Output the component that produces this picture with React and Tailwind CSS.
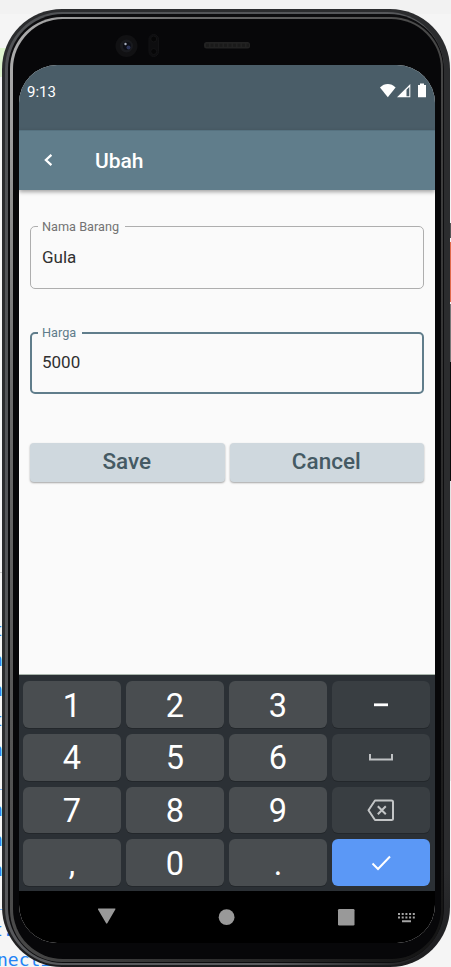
import React from "react";

const codeRows = [
  { top: 619, text: "t" },
  { top: 649, text: "n" },
  { top: 679, text: "n" },
  { top: 709, text: "t" },
  { top: 739, text: "n" },
  { top: 769, text: "_" },
  { top: 799, text: "n" },
  { top: 829, text: "n" },
  { top: 859, text: "n" },
  { top: 889, text: "_" },
  { top: 919, text: "t:" },
];

function EditorBackdrop() {
  return (
    <div className="absolute inset-0 overflow-hidden bg-[#f5f5f5]">
      <div className="h-[14px] bg-[#f2f2f2]" />
      <div className="absolute left-0 top-12 h-[29px] w-3 bg-[#dff5cf]" />
      <div className="absolute left-0 top-[572px] h-px w-3 bg-[#cccccc]" />
      {codeRows.map((row) => (
        <div
          key={row.top}
          className="absolute -left-[8px] font-['DejaVu_Sans_Mono',monospace] text-[18px] leading-[22px] text-[#2383f5]"
          style={{ top: row.top }}
        >
          {row.text}
        </div>
      ))}
      <div className="absolute -left-[3px] top-[949px] font-['DejaVu_Sans_Mono',monospace] text-[18px] leading-[22px] text-[#2383f5]">
        nectio
      </div>
      <div className="absolute left-[449px] top-[223px] h-[15px] w-[2px] bg-[#555555]" />
      <div className="absolute left-[449px] top-[242px] h-[60px] w-[2px] bg-[#e0694a]" />
      <div className="absolute left-[449px] top-[304px] h-[58px] w-[2px] bg-[#777777]" />
      <div className="absolute left-[449px] top-[362px] h-[119px] w-[2px] bg-[#0a0a0a]" />
      <div className="absolute left-[449px] top-[481px] h-[300px] w-[2px] bg-[#e4e4e4]" />
    </div>
  );
}

function Sensors() {
  return (
    <svg className="block h-[46px] w-full" viewBox="13 19 428 46">
      <circle cx="126.500" cy="46" r="11" fill="#111113" />
      <circle cx="126.500" cy="46" r="6.500" fill="#191a1e" />
      <circle cx="127" cy="46" r="4" fill="#0c0e16" />
      <circle cx="128.500" cy="47.500" r="2" fill="#2c3458" />
      <circle cx="125.500" cy="44" r="1.200" fill="#aab0bd" />
      <rect x="149" y="34.500" width="9.500" height="22" rx="4.700" fill="#0d0d0f" stroke="#121214" />
      <circle cx="153.700" cy="39" r="3" fill="#060607" stroke="#131315" />
      <circle cx="153.700" cy="51.500" r="3" fill="#060607" stroke="#131315" />
      <rect x="204" y="42" width="46" height="6.500" rx="2.500" fill="#222" />
      <path d="M206 45.200H249" stroke="#1a1a1a" strokeWidth="3" strokeDasharray="3 1.500" />
    </svg>
  );
}

function StatusBar() {
  return (
    <div className="flex h-[65px] items-start justify-between bg-[#4a5d68] pl-2 pr-2 pt-[17px] text-white">
      <span className="pt-px text-[15px] leading-[19px]">9:13</span>
      <svg className="mt-px h-4 w-[48px]" viewBox="379 83 48 16" fill="#fff">
        <path d="M387.800 97.300L380 87.400Q383.500 84 387.800 84T395.600 87.400Z" />
        <path d="M397 97.300L410.300 84V97.300Z" />
        <path d="M406.500 89.700L409.300 87V96.300H406.500Z" fill="#4a5d68" />
        <path d="M420 83.500H424V85H426V97.300H418V85H420Z" />
      </svg>
    </div>
  );
}

function AppBar() {
  return (
    <header className="relative flex h-[60px] items-center border-t border-[#567280] bg-[#607d8b] pl-[23px] text-white shadow-[0_2px_4px_rgba(0,0,0,0.35)]">
      <svg className="mb-px h-4 w-3" viewBox="0 0 12 16" fill="none" stroke="#fff" strokeWidth="2.300">
        <path d="M9.400 2.800L3.900 8L9.400 13.200" />
      </svg>
      <h1 className="ml-[41px] text-[21px] font-medium leading-6">Ubah</h1>
    </header>
  );
}

function Field({ label, value, focused }) {
  return (
    <fieldset
      className={
        focused
          ? "h-[69px] rounded-[5px] border-2 border-[#607d8b] pl-[6px]"
          : "h-[70px] rounded-[5px] border border-[#aeaeae] pl-[7px]"
      }
    >
      <legend
        className={
          focused
            ? "h-[15px] pl-[4px] pr-[6px] text-[12.700px] leading-[15px] text-[#607d8b]"
            : "h-[15px] pl-[4px] pr-[6px] text-[12.700px] leading-[15px] text-[#737373]"
        }
      >
        {label}
      </legend>
      <div
        className={
          focused
            ? "mt-[12px] pl-[4px] text-[17px] leading-5 text-[#303030]"
            : "mt-[13px] pl-[4px] text-[17px] leading-5 text-[#303030]"
        }
      >
        {value}
      </div>
    </fieldset>
  );
}

function ActionButton({ children }) {
  return (
    <button className="h-[39px] flex-1 rounded-[4px] bg-[#cfd8de] pb-[2px] pr-px text-[22.500px] font-medium text-[#455a64] shadow-[0_1px_2px_rgba(0,0,0,0.35)]">
      {children}
    </button>
  );
}

function Key({ children }) {
  return (
    <div className="flex items-center justify-center rounded-[6px] bg-[#494d50] pt-[3px] text-[32.500px] leading-none text-white shadow-[0_1px_0_#23272b]">
      {children}
    </div>
  );
}

function ActionKey({ children }) {
  return (
    <div className="flex items-center justify-center rounded-[6px] bg-[#393e42] shadow-[0_1px_0_#23272b]">
      {children}
    </div>
  );
}

function Keyboard() {
  return (
    <div className="grid h-[217px] grid-cols-4 grid-rows-4 gap-x-[5px] gap-y-[6px] border-t border-[#a9b5ac] bg-[#2b3035] pb-[5px] pl-[4px] pr-[5px] pt-[6px]">
      <Key>1</Key>
      <Key>2</Key>
      <Key>3</Key>
      <ActionKey>
        <svg className="h-6 w-8" viewBox="0 0 32 24">
          <path d="M9 12.800H23" stroke="#fff" strokeWidth="2.800" />
        </svg>
      </ActionKey>
      <Key>4</Key>
      <Key>5</Key>
      <Key>6</Key>
      <ActionKey>
        <svg className="h-6 w-8" viewBox="0 0 32 24" fill="none">
          <path d="M5 9V14.500H27V9" stroke="#bfc1c3" strokeWidth="2" />
        </svg>
      </ActionKey>
      <Key>7</Key>
      <Key>8</Key>
      <Key>9</Key>
      <ActionKey>
        <svg className="h-6 w-8" viewBox="0 0 32 24" fill="none" stroke="#c3c5c6" strokeWidth="2" strokeLinejoin="round">
          <path d="M10 2.500H26.500Q28 2.500 28 4V20.500Q28 22 26.500 22H10L3.500 12.250Z" />
          <path d="M12.800 8.200L20.800 16.200M20.800 8.200L12.800 16.200" />
        </svg>
      </ActionKey>
      <Key>,</Key>
      <Key>0</Key>
      <Key>.</Key>
      <div className="flex items-center justify-center rounded-[6px] bg-[#5b98f6]">
        <svg className="h-6 w-8" viewBox="0 0 32 24" fill="none">
          <path d="M7.500 12.500L13 18L25 5.500" stroke="#fff" strokeWidth="2" />
        </svg>
      </div>
    </div>
  );
}

function NavigationBar() {
  return (
    <svg className="block h-[52px] w-full bg-black" viewBox="19 891 416 52" fill="#999">
      <path d="M98.500 908.500H115Q115.800 908.700 115.300 909.500L107.300 923.300Q106.700 924 106.100 923.300L98 909.500Q97.700 908.700 98.500 908.500Z" />
      <circle cx="226.600" cy="917.200" r="7.900" />
      <rect x="338" y="909" width="16.500" height="16.500" rx="1.200" />
      <path
        d="M398 914H415M398 917.500H415"
        stroke="#a5a5a5"
        strokeWidth="2"
        strokeDasharray="2 1.700"
      />
      <path d="M402 921.300H411" stroke="#a5a5a5" strokeWidth="2" />
    </svg>
  );
}

function Screen() {
  return (
    <div className="ml-[6px] flex h-[878px] w-[416px] flex-col overflow-hidden rounded-[38px] bg-[#fafafa]">
      <StatusBar />
      <AppBar />
      <main className="flex flex-1 flex-col pl-[11px] pr-[11px] pt-[29px]">
        <Field label="Nama Barang" value="Gula" />
        <div className="mt-[36px]">
          <Field label="Harga" value="5000" focused />
        </div>
        <div className="mt-[49px] flex gap-[5px]">
          <ActionButton>Save</ActionButton>
          <ActionButton>Cancel</ActionButton>
        </div>
      </main>
      <Keyboard />
      <NavigationBar />
    </div>
  );
}

export default function App() {
  return (
    <div className="relative h-[967px] w-[451px] overflow-hidden pl-[2px] pt-[9px] font-[Roboto,sans-serif]">
      <EditorBackdrop />
      <div className="relative h-[958px] w-[448px] rounded-[60px] bg-linear-to-b from-[#2b2c2e] from-90% to-[#1c1c1e] pb-[2px] pl-[3px] pr-[6px] pt-[3px]">
        <div className="h-full rounded-[57px] bg-linear-to-br from-[#505255] via-[#5c5d60] via-80% to-[#242426] to-96% pb-[2px] pl-[3px] pt-[2px]">
          <div className="h-full rounded-[55px] bg-[#0d0d0f] pb-px pl-[2px] pr-px pt-[3px]">
            <div className="h-full rounded-[52px] bg-linear-to-br from-[#b4b4b4] via-[#6c6c6c] via-20% to-[#161616] to-97% pb-[3px] pl-[3px] pr-[2px] pt-[2px]">
              <div className="h-full rounded-[50px] bg-[#070709]">
                <Sensors />
                <Screen />
              </div>
            </div>
          </div>
        </div>
      </div>
    </div>
  );
}
